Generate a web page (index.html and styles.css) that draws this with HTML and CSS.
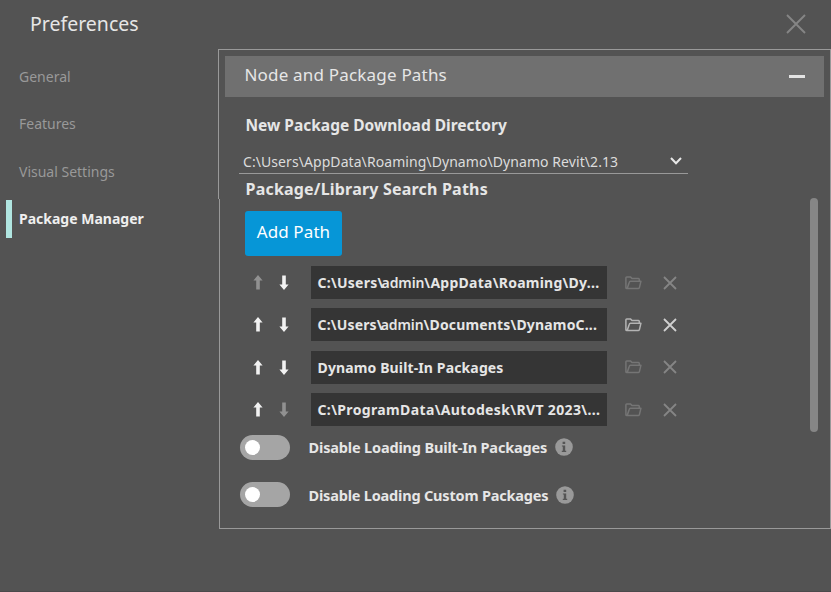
FILE: index.html
```html
<!DOCTYPE html>
<html lang="en">
<head>
<meta charset="utf-8">
<title>Preferences</title>
<link rel="stylesheet" href="styles.css">
</head>
<body>
<svg class="defs" width="0" height="0" aria-hidden="true">
  <symbol id="arrow" viewBox="0 0 10 15"><path d="M5 0 9.6 5.6H6.8V14.5H3.2V5.6H.4Z" fill="currentColor"/></symbol>
  <symbol id="folder" viewBox="0 0 17 14"><path d="M3.6 12.6H1.8Q.9 12.6.9 11.7V1.8Q.9.9 1.8.9H5.4L7 2.5H13.4Q14.3 2.5 14.3 3.4V5M2.2 12.6 4.2 6.4Q4.5 5.3 5.6 5.3H15.9L14.4 11.6Q14.1 12.6 13.2 12.6Z" fill="none" stroke="currentColor" stroke-width="1.5" stroke-linejoin="round"/></symbol>
  <symbol id="cross" viewBox="0 0 14 14"><path d="M1 1 13 13M13 1 1 13" fill="none" stroke="currentColor" stroke-width="1.8"/></symbol>
  <symbol id="info" viewBox="0 0 18 18"><circle cx="9" cy="9" r="8.8" fill="#999"/><path d="M7.6 3.8H10.2V6H7.6ZM6.9 7.4H10.2V12.8H11.2V14H6.8V12.8H7.8V8.6H6.9Z" fill="#555"/></symbol>
</svg>
<div class="window">
  <header class="titlebar">
    <h1 class="title">Preferences</h1>
    <svg class="close" viewBox="0 0 20 20"><path d="M1 1 19 19M19 1 1 19"/></svg>
  </header>
  <div class="body">
    <nav class="tabs">
      <div class="tab">General</div>
      <div class="tab">Features</div>
      <div class="tab">Visual Settings</div>
      <div class="tab active">Package Manager</div>
    </nav>
    <main class="panel">
      <div class="section-head"><span class="section-title">Node and Package Paths</span><i class="minus"></i></div>
      <div class="content">
        <div class="main-col">
          <h2 class="label label-dir">New Package Download Directory</h2>
          <div class="select"><span>C:\Users\AppData\Roaming\Dynamo\Dynamo Revit\2.13</span><svg class="chevron" viewBox="0 0 12 8"><path d="M1 1 6 6.2 11 1"/></svg></div>
          <h2 class="label label-search">Package/Library Search Paths</h2>
          <button class="add">Add Path</button>
          <div class="rows">
            <div class="row"><svg class="arrow dim"><use href="#arrow"/></svg><svg class="arrow down"><use href="#arrow"/></svg><div class="path p1"><span>C:\Users\<span class="user">admin</span>\AppData\Roaming\Dy...</span></div><svg class="folder off"><use href="#folder"/></svg><svg class="cross off"><use href="#cross"/></svg></div>
            <div class="row"><svg class="arrow"><use href="#arrow"/></svg><svg class="arrow down"><use href="#arrow"/></svg><div class="path p2"><span>C:\Users\<span class="user">admin</span>\Documents\DynamoC...</span></div><svg class="folder"><use href="#folder"/></svg><svg class="cross"><use href="#cross"/></svg></div>
            <div class="row"><svg class="arrow"><use href="#arrow"/></svg><svg class="arrow down"><use href="#arrow"/></svg><div class="path p3"><span>Dynamo Built-In Packages</span></div><svg class="folder off"><use href="#folder"/></svg><svg class="cross off"><use href="#cross"/></svg></div>
            <div class="row"><svg class="arrow"><use href="#arrow"/></svg><svg class="arrow down dim"><use href="#arrow"/></svg><div class="path p4"><span>C:\ProgramData\Autodesk\RVT 2023\...</span></div><svg class="folder off"><use href="#folder"/></svg><svg class="cross off"><use href="#cross"/></svg></div>
          </div>
          <div class="toggle-row"><i class="switch"></i><span class="toggle-label">Disable Loading Built-In Packages</span><svg class="info"><use href="#info"/></svg></div>
          <div class="toggle-row"><i class="switch"></i><span class="toggle-label custom">Disable Loading Custom Packages</span><svg class="info"><use href="#info"/></svg></div>
        </div>
        <div class="scrollbar"></div>
      </div>
    </main>
  </div>
</div>
</body>
</html>
```
FILE: styles.css
```css
* { box-sizing: border-box; }
body { margin: 0; background: #535353; color: #e6e6e6; font-family: "Noto Sans", "Open Sans", sans-serif; }
svg { display: block; flex: none; }
.defs { position: absolute; }
.window { width: 831px; height: 592px; overflow: hidden; border-bottom: 1px solid #4b494b; }
.titlebar { display: flex; align-items: center; justify-content: space-between; height: 49px; padding: 0 25px 2px 30px; }
.title { margin: 0; font-size: 19.5px; font-weight: 400; line-height: 28px; white-space: nowrap; }
.close { width: 20px; height: 20px; fill: none; stroke: #858585; stroke-width: 1.9; }
.body { display: flex; height: 480px; }
.tabs { width: 219px; padding: 8px 0 0 6px; flex: none; }
.tab { display: flex; align-items: center; height: 38px; margin-bottom: 9.6px; padding-left: 7px; border-left: 6px solid transparent; font-size: 14px; color: #999; white-space: nowrap; }
.tab.active { border-color: #b0e5e0; color: #efefef; font-weight: 700; }
.panel { position: relative; flex: 1; border: 1px solid #999; padding: 6px 6px 0 5px; }
/* the upper part of the frame stands one pixel further out */
.panel::before { content: ""; position: absolute; left: -2px; top: -1px; width: 2px; height: 149px; background: #535353; border-left: 1px solid #999; border-top: 1px solid #999; }
.section-head { display: flex; align-items: center; justify-content: space-between; height: 41px; padding: 0 19px 2px 20px; background: #707070; font-size: 17px; letter-spacing: .19px; white-space: nowrap; }
.section-title { margin: -2px 0 0 -.5px; }
.minus { width: 16px; height: 3px; background: #e3e3e3; margin-top: 2px; }
.content { display: flex; justify-content: space-between; }
.main-col { width: 480px; padding-left: 15px; }
.label { margin: 0 0 0 5.5px; font-size: 15.5px; font-weight: 700; line-height: 22px; white-space: nowrap; }
.label-dir { margin-top: 17px; }
.select { display: flex; align-items: center; justify-content: space-between; width: 449px; height: 25px; margin: 13px 0 0 -1px; padding: 0 6px 0 4px; border-bottom: 1px solid #999; font-size: 14px; letter-spacing: .07px; color: #dcdcdc; white-space: nowrap; }
.label-search { margin-top: 4px; font-size: 16px; letter-spacing: .2px; }
.chevron { width: 12px; height: 8px; fill: none; stroke: #e8e8e8; stroke-width: 2; }
.add { display: block; width: 97px; height: 45px; margin: 11px 0 0 5px; padding: 0 0 4px; border: 0; border-radius: 3px; background: #0696d7; color: #fff; font: 17px "Noto Sans", sans-serif; letter-spacing: .1px; white-space: nowrap; }
.rows { margin: 10px 0 0 13px; }
.row { display: flex; align-items: center; height: 33px; margin-bottom: 9.4px; }
.arrow { width: 10px; height: 15px; color: #f2f2f2; }
.arrow.down { margin-left: 16px; transform: rotate(180deg); }
.arrow.dim { color: #919191; }
.path { display: flex; align-items: center; width: 296px; height: 33px; margin-left: 22px; padding-left: 6.5px; background: #353535; font-size: 14px; font-weight: 700; white-space: nowrap; }
.p1 { letter-spacing: .25px; }
.p2 { letter-spacing: .16px; }
.p3 { letter-spacing: .13px; }
.p4 { letter-spacing: .36px; }
.user { margin-left: -2px; font-weight: 600; letter-spacing: -.1px; }
.folder { width: 17px; height: 14px; margin-left: 18px; color: #b4b4b4; }
.cross { width: 14px; height: 14px; margin-left: 21px; color: #d0d0d0; }
.off { color: #757575; }
.cross.off { color: #858585; }
.toggle-row { display: flex; align-items: center; height: 25px; margin-bottom: 22.6px; }
.rows + .toggle-row { margin-top: -1px; }
.switch { width: 50px; height: 25px; padding: 5px; border-radius: 13px; background: #a5a5a5; }
.switch::before { content: ""; display: block; width: 15px; height: 15px; border-radius: 50%; background: #fff; }
.toggle-label { margin: 0 0 0 18.5px; width: 239px; font-size: 14.5px; letter-spacing: -.16px; font-weight: 700; white-space: nowrap; }
.custom { width: 240px; letter-spacing: -.19px; }
.info { width: 18px; height: 18px; margin-left: 7px; }
.scrollbar { width: 8px; height: 234px; margin: 101px 6px 0 0; border-radius: 4px; background: #868686; }
```
